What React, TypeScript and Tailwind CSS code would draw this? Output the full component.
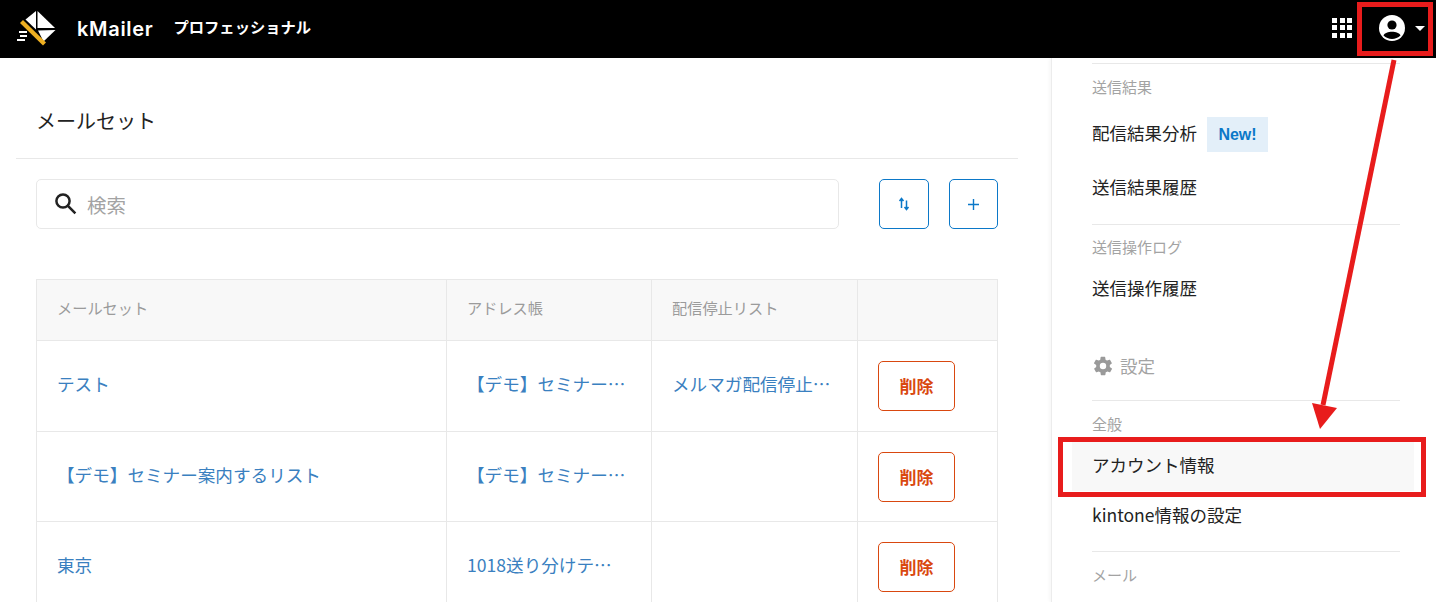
import React from "react";

const font = { fontFamily: '"Noto Sans CJK JP", "Noto Sans", sans-serif' };

function Logo() {
  return (
    <svg width="44" height="44" viewBox="0 0 44 44" className="block">
      <polygon points="20,4 9.5,12.5 20,22.5" fill="#fff" />
      <polygon points="21.5,4 39,21 21.5,21" fill="#fff" />
      <polygon points="22,23.5 39.5,23 27.5,34.5" fill="#fff" />
      <polygon points="7,13 4,16 27,38.5 30,35.5" fill="#eeaf21" />
      <rect x="3" y="24" width="8" height="2" fill="#fff" />
      <rect x="4" y="28" width="7" height="2" fill="#fff" />
      <rect x="1" y="32" width="8" height="2" fill="#fff" />
    </svg>
  );
}

function Cell({ w, children }: { w: string; children?: React.ReactNode }) {
  return <div className={`${w} shrink-0 flex items-center border-r border-[#e8e8e8] last:border-r-0`}>{children}</div>;
}

function Del() {
  return (
    <button className="ml-5 w-[77px] h-[50px] rounded-[5px] border border-[#d9480f] text-[#d9480f] text-[17px] font-bold flex items-center justify-center bg-white">
      削除
    </button>
  );
}

function Row({ h, pad, a, b, c }: { h: string; pad: string; a: string; b: string; c?: string }) {
  return (
    <div className={`flex ${h} border-t border-[#e8e8e8] text-[17.6px] text-[#3a80c0]`}>
      <Cell w="w-[410px]"><span className={`pl-5 ${pad} whitespace-nowrap`}>{a}</span></Cell>
      <Cell w="w-[205px]"><span className={`pl-5 ${pad} whitespace-nowrap`}>{b}</span></Cell>
      <Cell w="w-[206px]">{c && <span className={`pl-5 ${pad} whitespace-nowrap`}>{c}</span>}</Cell>
      <Cell w="w-[139px]"><Del /></Cell>
    </div>
  );
}

export default function App() {
  return (
    <div className="relative w-[1436px] h-[602px] overflow-hidden bg-white text-[#222]" style={font}>
      <header className="h-[58px] bg-black flex items-center text-white">
        <div className="ml-4 w-[44px] h-[44px]">
          <Logo />
        </div>
        <span className="ml-[17px] text-[20px] font-semibold tracking-[0.7px]" style={{ fontFamily: '"Inter", sans-serif' }}>kMailer</span>
        <span className="ml-[20px] text-[15.3px] font-bold mb-[5px]">プロフェッショナル</span>
        <div className="ml-auto flex items-center">
          <div className="grid grid-cols-3 gap-[2.5px] w-[20px] mr-[27px] mt-[-3px]">
            {Array.from({ length: 9 }).map((_, i) => <span key={i} className="w-[5px] h-[5px] bg-white" />)}
          </div>
          <svg width="26" height="26" viewBox="0 0 26 26" className="mr-[10px] mt-[-2px]">
            <circle cx="13" cy="13" r="13" fill="#fff" />
            <circle cx="13" cy="10" r="4.6" fill="#000" />
            <path d="M4.5 20.5 C6.5 15.5 19.5 15.5 21.5 20.5 C17 25 9 25 4.5 20.5Z" fill="#000" />
          </svg>
          <span className="mr-[11px] w-0 h-0 border-x-[5px] border-x-transparent border-t-[5px] border-t-white mt-[-2px]" />
        </div>
      </header>

      <div className="flex h-[544px]">
        <main className="w-[1051px] shrink-0 px-4">
          <div className="h-[101px] border-b border-[#e8e8e8] w-[1002px] pl-5 pt-[48px] text-[20px] leading-[30px]">メールセット</div>
          <div className="flex mt-5 ml-5 w-[962px]">
            <div className="w-[803px] h-[50px] border border-[#e8e8e8] rounded-[5px] flex items-center pl-4">
              <svg width="24" height="24" viewBox="0 0 24 24" fill="none" stroke="#222" strokeWidth="2.5" className="mb-[2px]">
                <circle cx="10" cy="10" r="6.6" />
                <path d="M15 15 L21.5 21.5" strokeLinecap="square" />
              </svg>
              <span className="ml-[10px] mt-[2px] text-[#a3a3a3] text-[19.5px]">検索</span>
            </div>
            <button className="ml-[40px] w-[50px] h-[50px] rounded-[5px] border border-[#0b78c8] flex items-center justify-center">
              <svg width="12" height="14" viewBox="0 0 12 14" fill="none" stroke="#0b78c8" strokeWidth="1.5">
                <path d="M3.5 11 V2 M1.5 4 L3.5 1.5 L5.5 4" />
                <path d="M8.5 3.5 V12.5 M6.5 10 L8.5 12.5 L10.5 10" />
              </svg>
            </button>
            <button className="ml-[20px] w-[49px] h-[50px] rounded-[5px] border border-[#0b78c8] flex items-center justify-center">
              <svg width="11" height="11" viewBox="0 0 11 11" stroke="#0b78c8" strokeWidth="1.4"><path d="M5.5 0 V11 M0 5.5 H11" /></svg>
            </button>
          </div>
          <div className="mt-[50px] ml-5 w-[962px] border-x border-t border-[#e8e8e8]">
            <div className="flex h-[60px] bg-[#f8f8f8] text-[15.2px] text-[#9b9b9b]">
              <Cell w="w-[410px]"><span className="pl-5 pb-[6px]">メールセット</span></Cell>
              <Cell w="w-[205px]"><span className="pl-5 pb-[6px]">アドレス帳</span></Cell>
              <Cell w="w-[206px]"><span className="pl-5 pb-[6px]">配信停止リスト</span></Cell>
              <Cell w="w-[139px]" />
            </div>
            <Row h="h-[91px]" pad="pb-1" a="テスト" b="【デモ】セミナー…" c="メルマガ配信停止…" />
            <Row h="h-[90px]" pad="pb-[2px]" a="【デモ】セミナー案内するリスト" b="【デモ】セミナー…" />
            <Row h="h-[90px]" pad="pb-[2px]" a="東京" b="1018送り分けテ…" />
          </div>
        </main>

        <aside className="relative flex-1 border-l border-[#ececec] shadow-[-2px_0_3px_rgba(0,0,0,0.03)] pl-[40px] pr-[36px]">
          <div className="border-t border-[#e8e8e8] mt-[5px] pt-[12px] text-[15px] leading-[22px] text-[#a3a3a3]">送信結果</div>
          <div className="flex items-center h-[35px] mt-[19px] text-[17.5px]">
            <span className="mb-[2px]">配信結果分析</span>
            <span className="ml-[10px] h-[35px] w-[61px] bg-[#e3eff9] text-[#0b78c8] text-[16px] font-bold flex items-center justify-center" style={{ fontFamily: '"Liberation Sans", sans-serif' }}>New!</span>
          </div>
          <div className="mt-[22px] h-[26px] leading-[26px] text-[17.5px]">送信結果履歴</div>
          <div className="border-t border-[#e8e8e8] mt-[24px] pt-[11px] text-[15px] leading-[22px] text-[#a3a3a3]">送信操作ログ</div>
          <div className="mt-[17px] h-[26px] leading-[26px] text-[17.5px]">送信操作履歴</div>
          <div className="mt-[52px] h-[26px] flex items-center text-[17.5px] text-[#a3a3a3]">
            <svg width="22" height="22" viewBox="0 0 24 24" fill="#9a9a9a" className="mr-[6px]">
              <path d="M19.4 13a7.5 7.5 0 0 0 0-2l2.1-1.6a.5.5 0 0 0 .1-.7l-2-3.4a.5.5 0 0 0-.6-.2l-2.5 1a7.3 7.3 0 0 0-1.7-1l-.4-2.7a.5.5 0 0 0-.5-.4h-4a.5.5 0 0 0-.5.4l-.4 2.7a7.3 7.3 0 0 0-1.7 1l-2.5-1a.5.5 0 0 0-.6.2l-2 3.4a.5.5 0 0 0 .1.7L4.6 11a7.5 7.5 0 0 0 0 2l-2.1 1.6a.5.5 0 0 0-.1.7l2 3.4a.5.5 0 0 0 .6.2l2.5-1a7.3 7.3 0 0 0 1.7 1l.4 2.7a.5.5 0 0 0 .5.4h4a.5.5 0 0 0 .5-.4l.4-2.7a7.3 7.3 0 0 0 1.7-1l2.5 1a.5.5 0 0 0 .6-.2l2-3.4a.5.5 0 0 0-.1-.7zM12 15.5a3.5 3.5 0 1 1 0-7 3.5 3.5 0 0 1 0 7z" />
            </svg>
            設定
          </div>
          <div className="border-t border-[#e8e8e8] mt-[21px] pt-[12px] text-[15px] leading-[22px] text-[#a3a3a3]">全般</div>
          <div className="-ml-5 -mr-[14px] mt-[6px] pl-5 pb-[2px] h-[50px] bg-[#f8f8f8] flex items-center text-[17.5px]">アカウント情報</div>
          <div className="h-[48px] flex items-center text-[17.5px]">kintone情報の設定</div>
          <div className="border-t border-[#e8e8e8] mt-[12px] pt-[12px] text-[15px] leading-[22px] text-[#a3a3a3]">メール</div>
        </aside>
      </div>

      <div className="absolute left-[1357px] top-[2px] w-[76px] h-[54px] border-[5px] border-[#e81c1c]" />
      <div className="absolute left-[1058px] top-[437px] w-[368px] h-[60px] border-[5px] border-[#e81c1c]" />
      <svg className="absolute left-0 top-0 pointer-events-none" width="1436" height="602">
        <path d="M1394 60 L1323 405" stroke="#e81c1c" strokeWidth="5" />
        <polygon points="1312,403 1337,408 1320,429" fill="#e81c1c" />
      </svg>
    </div>
  );
}
